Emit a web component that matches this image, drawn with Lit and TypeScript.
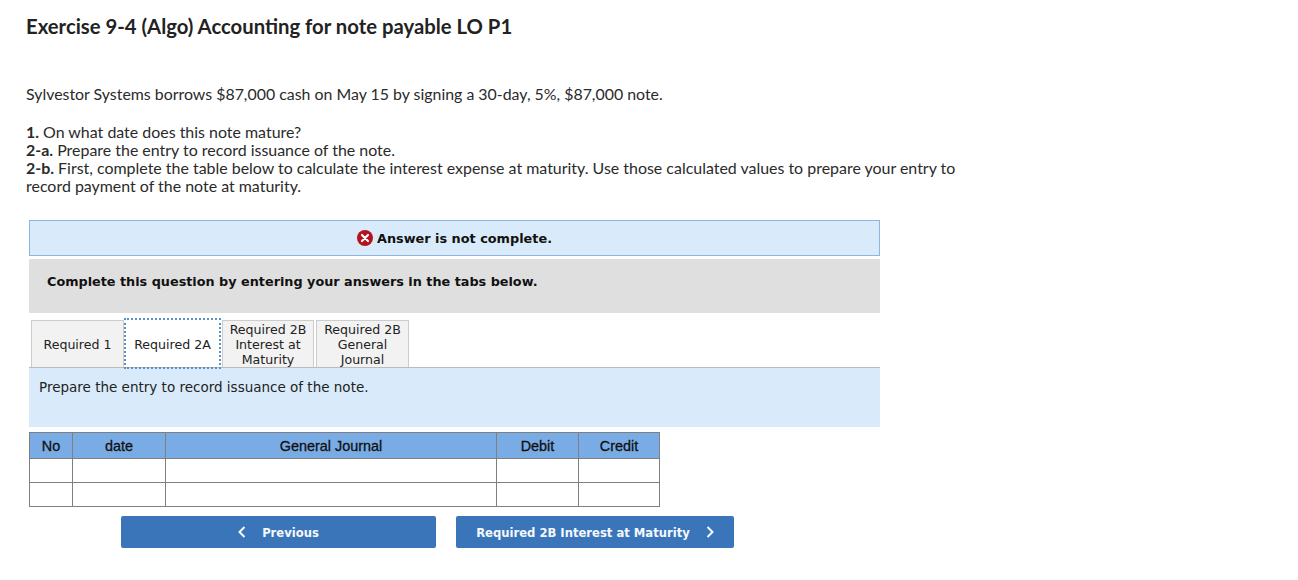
import { LitElement, html, css } from 'lit';
import { customElement } from 'lit/decorators.js';

const tabs = [
  { lines: ['Required 1'] },
  { lines: ['Required 2A'], active: true },
  { lines: ['Required 2B', 'Interest at', 'Maturity'] },
  { lines: ['Required 2B', 'General', 'Journal'] }
];

@customElement('app-root')
export class AppRoot extends LitElement {
  static styles = css`
    :host {
      display: block;
      background: #fff;
      color: #111;
      height: 580px;
      overflow: hidden;
      font-family: 'Lato', 'Liberation Sans', sans-serif;
    }
    .intro {
      padding: 13px 0 0 26px;
      width: 945px;
    }
    h1 {
      margin: 0;
      font-size: 20.3px;
      line-height: 26px;
      font-weight: 700;
      color: #222;
    }
    .lead {
      margin: 46px 0 20px;
      font-size: 15.9px;
      line-height: 18px;
      color: #2a2a2a;
    }
    .steps {
      margin: 0;
      font-size: 15.95px;
      line-height: 18px;
      color: #2a2a2a;
    }
    .question {
      margin: 25px 0 0 29px;
      width: 851px;
      font-family: 'DejaVu Sans', 'Liberation Sans', sans-serif;
    }
    .status {
      box-sizing: border-box;
      height: 36px;
      background: #d9ebfa;
      border: 1px solid #8db4e2;
      display: flex;
      align-items: center;
      justify-content: center;
      gap: 4px;
      font-size: 12.85px;
      font-weight: 700;
      color: #111;
    }
    .status svg {
      display: block;
    }
    .prompt {
      margin-top: 3px;
      height: 54px;
      box-sizing: border-box;
      background: #dfdfdf;
      padding: 14px 0 0 18px;
      font-size: 12.8px;
      line-height: 17px;
      font-weight: 700;
      color: #111;
    }
    .tabs {
      display: flex;
      align-items: flex-end;
      margin: 7px 0 0 2px;
      height: 47px;
    }
    .tab {
      box-sizing: border-box;
      width: 93px;
      height: 47px;
      margin-right: 2px;
      display: flex;
      flex-direction: column;
      align-items: center;
      justify-content: center;
      background: #f2f2f2;
      border: 1px solid #ccc;
      border-bottom: none;
      font-size: 12.6px;
      line-height: 15px;
      color: #222;
    }
    .tab.active {
      background: #fff;
      border: none;
      padding-top: 1px;
      outline: 2px dotted #5b8fc7;
      position: relative;
      z-index: 1;
      margin-right: 3px;
    }
    .tab.active + .tab {
      width: 92px;
    }
    .panel {
      height: 60px;
      box-sizing: border-box;
      background: #d9ebfa;
      border-top: 1px solid #bbb;
      padding: 11px 0 0 10px;
      font-size: 13.5px;
      line-height: 17px;
      color: #222;
    }
    table {
      margin-top: 5px;
      width: 630px;
      border-collapse: collapse;
      table-layout: fixed;
      font-family: 'Liberation Sans', Arial, sans-serif;
      font-size: 14.4px;
    }
    .c-no {
      width: 43px;
    }
    .c-date {
      width: 93px;
    }
    .c-journal {
      width: 331px;
    }
    .c-debit {
      width: 82px;
    }
    .c-credit {
      width: 81px;
    }
    th,
    td {
      border: 1px solid #7f7f7f;
      padding: 0;
    }
    th {
      height: 25px;
      background: #79ace4;
      color: #111;
      -webkit-text-stroke: 0.3px #111;
      font-weight: 400;
    }
    td {
      height: 23px;
      background: #fff;
    }
    .actions {
      display: flex;
      gap: 20px;
      margin: 9px 0 0 92px;
    }
    .btn {
      box-sizing: border-box;
      height: 32px;
      display: flex;
      align-items: center;
      justify-content: center;
      gap: 16px;
      background: #3a75b9;
      border-radius: 2px;
      color: #f4f8fc;
      font-size: 12.9px;
      font-weight: 700;
      font-stretch: condensed;
    }
    .btn.prev {
      width: 315px;
    }
    .btn.next {
      width: 278px;
    }
    .btn svg {
      display: block;
    }
  `;

  render() {
    return html`
      <div class="intro">
        <h1>Exercise 9-4 (Algo) Accounting for note payable LO P1</h1>
        <p class="lead">Sylvestor Systems borrows $87,000 cash on May 15 by signing a 30-day, 5%, $87,000 note.</p>
        <p class="steps">
          <b>1.</b> On what date does this note mature?<br />
          <b>2-a.</b> Prepare the entry to record issuance of the note.<br />
          <b>2-b.</b> First, complete the table below to calculate the interest expense at maturity. Use those calculated values to prepare your entry to record payment of the note at maturity.
        </p>
      </div>
      <div class="question">
        <div class="status">
          <svg width="16" height="16" viewBox="0 0 16 16">
            <circle cx="8" cy="8" r="8" fill="#b5121b"></circle>
            <path d="M5 5l6 6M11 5l-6 6" stroke="#fff" stroke-width="2.2" stroke-linecap="round"></path>
          </svg>
          <span>Answer is not complete.</span>
        </div>
        <div class="prompt">Complete this question by entering your answers in the tabs below.</div>
        <div class="tabs">
          ${tabs.map(
            (t) => html`
              <div class="tab ${t.active ? 'active' : ''}">
                ${t.lines.map((l) => html`<span>${l}</span>`)}
              </div>
            `
          )}
        </div>
        <div class="panel">Prepare the entry to record issuance of the note.</div>
        <table>
          <colgroup>
            <col class="c-no" />
            <col class="c-date" />
            <col class="c-journal" />
            <col class="c-debit" />
            <col class="c-credit" />
          </colgroup>
          <thead>
            <tr><th>No</th><th>date</th><th>General Journal</th><th>Debit</th><th>Credit</th></tr>
          </thead>
          <tbody>
            <tr><td></td><td></td><td></td><td></td><td></td></tr>
            <tr><td></td><td></td><td></td><td></td><td></td></tr>
          </tbody>
        </table>
        <div class="actions">
          <div class="btn prev">
            <svg width="8" height="12" viewBox="0 0 8 12"><path d="M6.5 1L1.5 6l5 5" fill="none" stroke="#f4f8fc" stroke-width="2"></path></svg>
            <span>Previous</span>
          </div>
          <div class="btn next">
            <span>Required 2B Interest at Maturity</span>
            <svg width="8" height="12" viewBox="0 0 8 12"><path d="M1.5 1l5 5-5 5" fill="none" stroke="#f4f8fc" stroke-width="2"></path></svg>
          </div>
        </div>
      </div>
    `;
  }
}
